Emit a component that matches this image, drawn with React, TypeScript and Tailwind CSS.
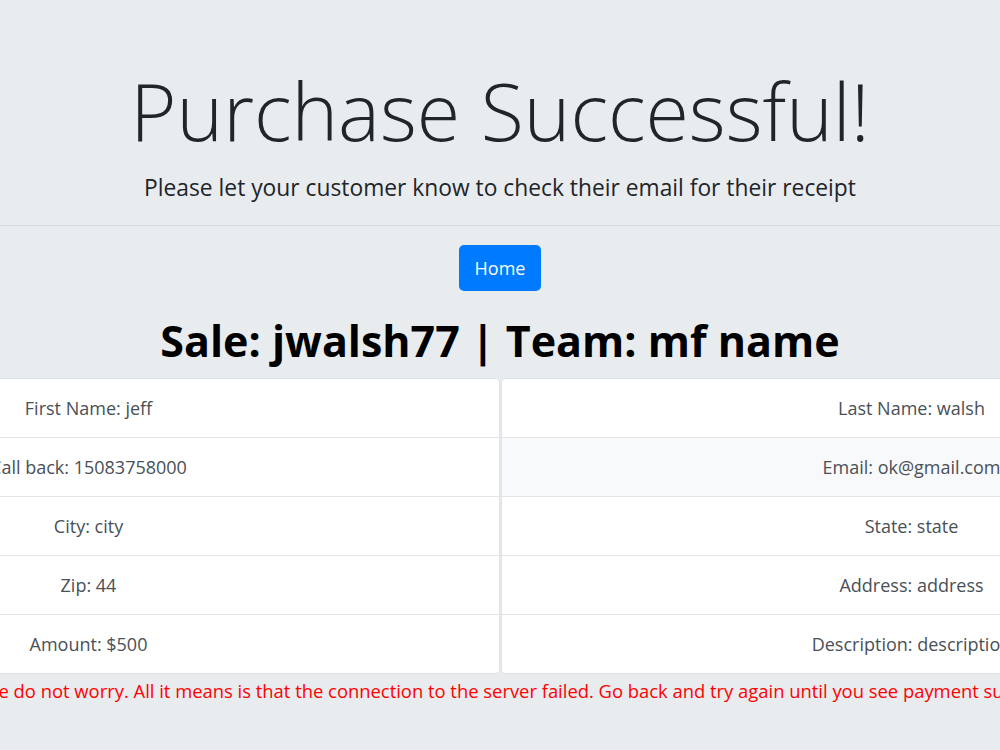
import React from 'react';

const leftItems = ['First Name: jeff', 'Call back: 15083758000', 'City: city', 'Zip: 44', 'Amount: $500'];
const rightItems = ['Last Name: walsh', 'Email: ok@gmail.com', 'State: state', 'Address: address', 'Description: description'];

function InfoList({ items, shadedRow }: { items: string[]; shadedRow?: number }) {
  return (
    <ul className="w-[822px] shrink-0 overflow-hidden rounded-[5px] border border-[#dfe1e4] bg-white">
      {items.map((item, i) => (
        <li
          key={item}
          className={`px-[24px] py-[14.6px] text-center text-[18px] leading-[28.8px] text-[#495057] ${
            i > 0 ? 'border-t border-[#e3e5e8]' : ''
          } ${shadedRow === i ? 'bg-[#f8f9fa]' : 'bg-white'}`}
        >
          {item}
        </li>
      ))}
    </ul>
  );
}

export default function App() {
  return (
    <div className="min-h-screen overflow-hidden bg-[#e9ecef] font-['Open_Sans','Noto_Sans',sans-serif] text-[#212529]">
      <div className="pt-[63.5px] text-center">
        <h1 className="text-[79px] font-light leading-[1.2]">Purchase Successful!</h1>
        <p className="mt-[12.7px] text-[22.8px] leading-[1.5]">
          Please let your customer know to check their email for their receipt
        </p>
        <hr className="mt-[20px] border-t border-[#d6d8db]" />
      </div>

      <div className="mt-[19px] flex justify-center">
        <button className="h-[46px] rounded-[5px] bg-[#007bff] px-[16px] text-[18px] text-white">Home</button>
      </div>

      <h1 className="mt-[23.5px] text-center text-[43px] font-bold leading-[1.2] text-black">
        Sale: jwalsh77 | Team: mf name
      </h1>

      <div className="mt-[12px] flex justify-center">
        <div className="flex shrink-0 gap-[1px]">
          <InfoList items={leftItems} />
          <InfoList items={rightItems} shadedRow={1} />
        </div>
      </div>

      <div className="mt-[3px] flex justify-center">
        <p className="shrink-0 whitespace-nowrap text-[18.4px] leading-[27px] text-[#ff0000]">
          If you see an error message please do not worry. All it means is that the connection to the server failed. Go back and try again until you see payment successful on screen before you go.
        </p>
      </div>
    </div>
  );
}
